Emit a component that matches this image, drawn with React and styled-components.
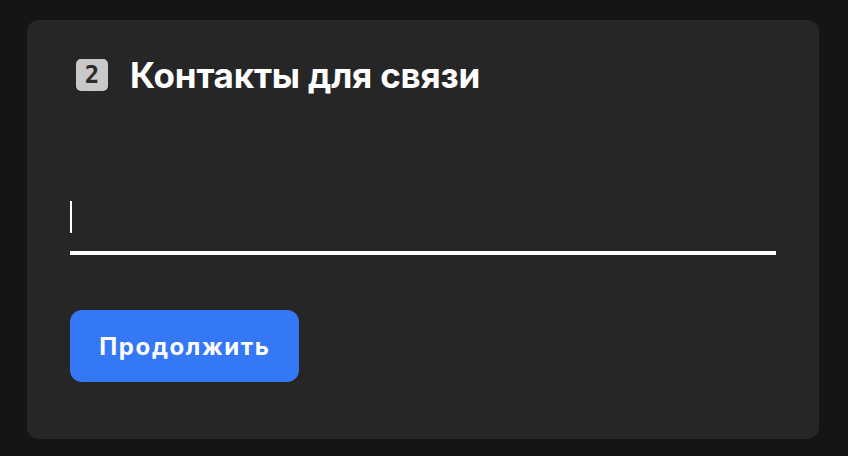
import styled, { createGlobalStyle } from 'styled-components'

const GlobalStyle = createGlobalStyle`
  html, body {
    margin: 0;
    background: #151517;
  }
  body {
    font-family: Inter, "Noto Sans", "Liberation Sans", sans-serif;
    color: #fff;
  }
`;

const Page = styled.div`
  padding: 20px 29px 17px 27px;
`;

const Card = styled.section`
  background: #262626;
  border-radius: 12px;
  padding: 39px 43px 57px 43px;
`;

const TitleRow = styled.div`
  display: flex;
  align-items: center;
  gap: 22px;
  height: 32px;
  padding-left: 6px;
`;

// номер шага — серая «клавиша» с цифрой
const StepBadge = styled.span`
  display: flex;
  align-items: center;
  justify-content: center;
  width: 32px;
  height: 32px;
  border-radius: 5px;
  background: #c9c9c9;
  color: #2b2b2b;
  font-family: "DejaVu Sans Mono", monospace;
  font-weight: 700;
  font-size: 24px;
  line-height: 1;
`;

const Title = styled.h2`
  margin: 0;
  font-size: 35px;
  font-weight: 700;
  line-height: 1;
  letter-spacing: -0.2px;
`;

const Field = styled.label`
  display: flex;
  align-items: center;
  margin-top: 110px;
  padding-bottom: 18px;
  border-bottom: 4px solid #fff;
`;

const Caret = styled.span`
  width: 2px;
  height: 32px;
  background: #fff;
  flex: none;
`;

const Input = styled.input`
  flex: 1;
  height: 32px;
  padding: 0;
  border: 0;
  outline: none;
  background: transparent;
  color: #fff;
  caret-color: transparent;
  font-family: inherit;
  font-size: 24px;
`;

const Button = styled.button`
  display: block;
  margin-top: 55px;
  width: 229px;
  height: 72px;
  padding: 0 0 0 1px;
  border: 0;
  border-radius: 12px;
  background: #3478f6;
  color: #fff;
  font-family: inherit;
  font-size: 24px;
  font-weight: 700;
  letter-spacing: 1.6px;
  cursor: pointer;
`;

const App = () => {
  return (
    <Page>
      <GlobalStyle />
      <Card>
        <TitleRow>
          <StepBadge>2</StepBadge>
          <Title>Контакты для связи</Title>
        </TitleRow>
        <Field>
          <Caret />
          <Input type="text" />
        </Field>
        <Button>Продолжить</Button>
      </Card>
    </Page>
  );
}

export default App;
